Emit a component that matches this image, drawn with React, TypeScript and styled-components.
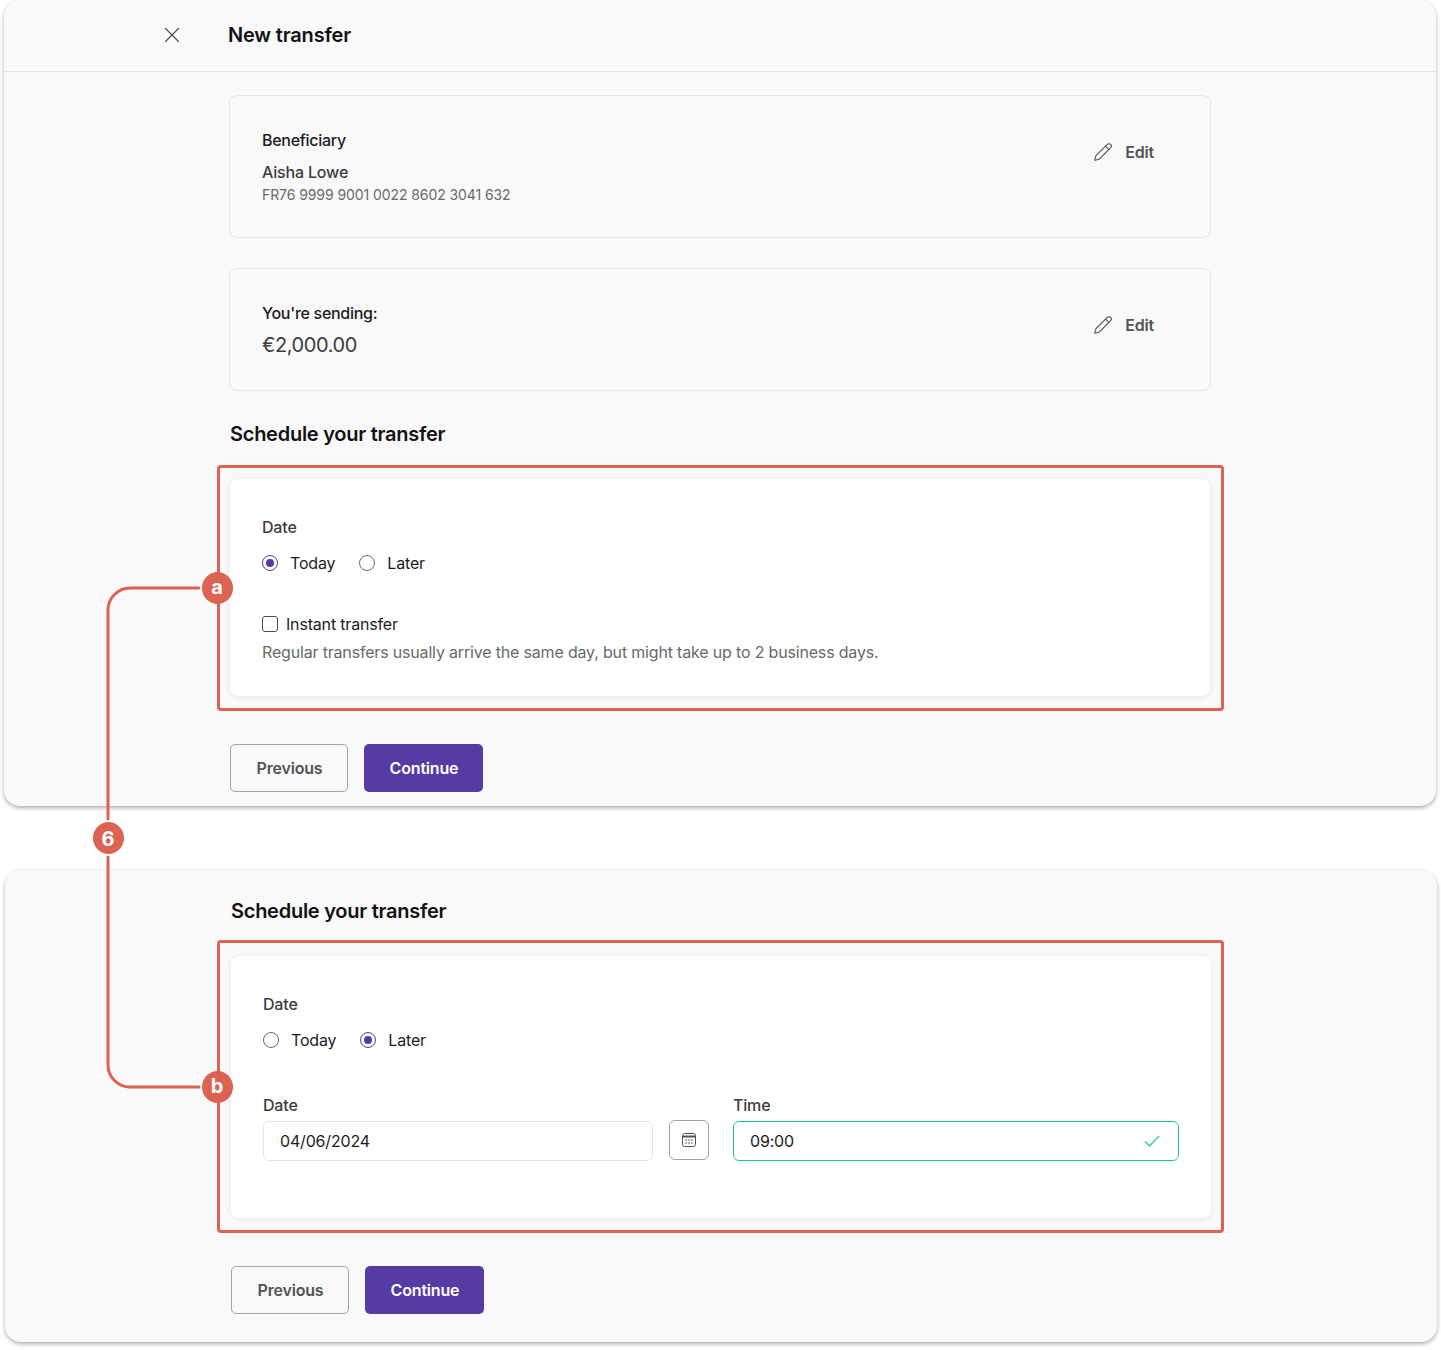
import React from "react";
import styled, { createGlobalStyle } from "styled-components";
import { Pencil, X } from "lucide-react";

const RED = "#dc6252";
const PURPLE = "#563ba5";

const GlobalStyle = createGlobalStyle`
  html, body {
    margin: 0;
    background: #fff;
  }
  body {
    font-family: Inter, "Liberation Sans", sans-serif;
    font-size: 16px;
    line-height: 24px;
    letter-spacing: -0.011em;
    color: #3d3d3f;
  }
  * {
    box-sizing: border-box;
  }
  input, button {
    letter-spacing: inherit;
  }
`;

const RadioOption = ({ label, checked }: { label: string; checked?: boolean }) => (
  <RadioLabel>
    <RadioDot $checked={checked} />
    {label}
  </RadioLabel>
);

const DateRadios = ({ later }: { later?: boolean }) => (
  <>
    <FieldLabel>Date</FieldLabel>
    <RadioRow>
      <RadioOption label="Today" checked={!later} />
      <RadioOption label="Later" checked={later} />
    </RadioRow>
  </>
);

const EditButton = () => (
  <EditAction>
    <Pencil size={20} strokeWidth={1.25} />
    <span>Edit</span>
  </EditAction>
);

const Actions = () => (
  <ButtonRow>
    <SecondaryButton>Previous</SecondaryButton>
    <PrimaryButton>Continue</PrimaryButton>
  </ButtonRow>
);

const App = () => {
  return (
    <Page>
      <GlobalStyle />
      <Panel $left={4}>
        <Header>
          <CloseSlot>
            <X size={26} strokeWidth={1.05} />
          </CloseSlot>
          <Title>New transfer</Title>
        </Header>
        <Content $bottom={14}>
          <SummaryCard>
            <div>
              <CardTitle>Beneficiary</CardTitle>
              <Name>Aisha Lowe</Name>
              <Iban>FR76 9999 9001 0022 8602 3041 632</Iban>
            </div>
            <EditButton />
          </SummaryCard>
          <SummaryCard $top={30}>
            <div>
              <CardTitle>You're sending:</CardTitle>
              <Amount>€2,000.00</Amount>
            </div>
            <EditButton />
          </SummaryCard>
          <Heading $top={31}>Schedule your transfer</Heading>
          <Highlight $top={33} $inset="-14px -14px -15px -13px">
            <FormCard $bottom={32}>
              <DateRadios />
              <CheckRow>
                <CheckBox />
                Instant transfer
              </CheckRow>
              <Help>Regular transfers usually arrive the same day, but might take up to 2 business days.</Help>
            </FormCard>
          </Highlight>
          <Actions />
        </Content>
      </Panel>

      <Panel $left={5} $top={64} $pad={29}>
        <Content $bottom={28}>
          <Heading>Schedule your transfer</Heading>
          <Highlight $top={33} $inset="-16px -13px -15px -14px">
            <FormCard $bottom={57}>
              <DateRadios later />
              <FieldGrid>
                <Field>
                  <FieldLabel>Date</FieldLabel>
                  <TextInput readOnly value="04/06/2024" />
                </Field>
                <CalendarButton>
                  <svg width="14" height="14" viewBox="0 0 14 14" fill="none" stroke="#555" strokeWidth="1">
                    <rect x="0.5" y="0.5" width="13" height="13" rx="2" />
                    <path d="M0.5 3.5h13" strokeWidth="2" />
                    <path d="M3.5 7h1.2M6.4 7h1.2M9.3 7h1.2M3.5 10h1.2M6.4 10h1.2M9.3 10h1.2" strokeWidth="1.3" />
                  </svg>
                </CalendarButton>
                <Field>
                  <FieldLabel>Time</FieldLabel>
                  <InputWrap>
                    <TextInput $valid readOnly value="09:00" />
                    <CheckMark width="16" height="12" viewBox="0 0 16 12" fill="none">
                      <path d="M1 6.5l4.5 4.5L15 1" stroke="#35d096" strokeWidth="1.4" />
                    </CheckMark>
                  </InputWrap>
                </Field>
              </FieldGrid>
            </FormCard>
          </Highlight>
          <Actions />
        </Content>
      </Panel>

      <Connector width="210" height="530" viewBox="0 0 210 530" fill="none">
        <path d="M199 8H130a22 22 0 0 0-22 22V239M108 277V485a22 22 0 0 0 22 22h69" stroke={RED} strokeWidth="3" strokeLinecap="round" />
      </Connector>
      <Badge $x={217} $y={588}>a</Badge>
      <Badge $x={108} $y={838} $digit>6</Badge>
      <Badge $x={217} $y={1087}>b</Badge>
    </Page>
  );
};

export default App;

const Page = styled.div`
  position: relative;
  width: 1441px;
  height: 1350px;
  overflow: hidden;
`;

const Panel = styled.section<{ $left: number; $top?: number; $pad?: number }>`
  width: 1432px;
  margin-left: ${(p) => p.$left}px;
  margin-top: ${(p) => p.$top ?? 0}px;
  padding-top: ${(p) => p.$pad ?? 0}px;
  background: #f9f9f9;
  border-radius: 16px;
  box-shadow: 0 2px 4px rgba(0, 0, 0, 0.32);
`;

const Header = styled.header`
  display: flex;
  align-items: center;
  height: 72px;
  padding-bottom: 1px;
  border-bottom: 1px solid #e4e4e4;
`;

const CloseSlot = styled.div`
  display: flex;
  justify-content: center;
  width: 224px;
  padding-left: 112px;
  color: #4c4c4e;
`;

const Title = styled.h1`
  margin: 0;
  font-size: 20px;
  line-height: 28px;
  font-weight: 600;
  color: #111113;
`;

const Content = styled.div<{ $bottom: number }>`
  width: 1207px;
  padding-left: 225px;
  padding-bottom: ${(p) => p.$bottom}px;
`;

const SummaryCard = styled.div<{ $top?: number }>`
  display: flex;
  justify-content: space-between;
  align-items: flex-start;
  margin-top: ${(p) => p.$top ?? 23}px;
  padding: 32px 56px 31px 32px;
  border: 1px solid #e4e4e4;
  border-radius: 8px;
`;

const CardTitle = styled.div`
  font-weight: 500;
  letter-spacing: -0.018em;
  color: #1c1c1e;
`;

const Name = styled.div`
  margin-top: 8px;
  font-weight: 500;
`;

const Iban = styled.div`
  font-size: 14px;
  line-height: 22px;
  letter-spacing: -0.006em;
  color: #69696b;
`;

const Amount = styled.div`
  margin-top: 6px;
  font-size: 20px;
  line-height: 28px;
  letter-spacing: -0.02em;
`;

const EditAction = styled.div`
  display: flex;
  align-items: center;
  gap: 12px;
  height: 48px;
  font-weight: 600;
  color: #525254;

  svg {
    stroke: #4c4c4e;
  }
`;

const Heading = styled.h2<{ $top?: number }>`
  margin: ${(p) => p.$top ?? 0}px 0 0 1px;
  font-size: 20px;
  line-height: 24px;
  font-weight: 600;
  letter-spacing: -0.013em;
  color: #111113;
`;

const Highlight = styled.div<{ $top: number; $inset: string }>`
  position: relative;
  margin: ${(p) => p.$top}px 1px 0;

  &::after {
    content: "";
    position: absolute;
    inset: ${(p) => p.$inset};
    border: 3px solid ${RED};
    border-radius: 4px;
    pointer-events: none;
  }
`;

const FormCard = styled.div<{ $bottom: number }>`
  padding: 36px 32px ${(p) => p.$bottom}px;
  background: #fff;
  border-radius: 8px;
  box-shadow: 0 1px 6px rgba(0, 0, 0, 0.08);
`;

const FieldLabel = styled.div`
  font-weight: 500;
  color: #3d3d3f;
`;

const RadioRow = styled.div`
  display: flex;
  gap: 24px;
  margin-top: 12px;
`;

const RadioLabel = styled.label`
  display: flex;
  align-items: center;
  gap: 12px;
  color: #1c1c1e;
`;

const RadioDot = styled.span<{ $checked?: boolean }>`
  display: flex;
  align-items: center;
  justify-content: center;
  width: 16px;
  height: 16px;
  border-radius: 50%;
  border: 1px solid ${(p) => (p.$checked ? PURPLE : "#69696b")};

  &::after {
    content: "";
    display: ${(p) => (p.$checked ? "block" : "none")};
    width: 8px;
    height: 8px;
    border-radius: 50%;
    background: ${PURPLE};
  }
`;

const CheckRow = styled.label`
  display: flex;
  align-items: center;
  gap: 8px;
  margin-top: 37px;
  color: #1c1c1e;
`;

const CheckBox = styled.span`
  width: 16px;
  height: 16px;
  border: 1px solid #4c4c4e;
  border-radius: 3px;
`;

const Help = styled.p`
  margin: 4px 0 0;
  color: #69696b;
`;

const FieldGrid = styled.div`
  display: grid;
  grid-template-columns: 390px 40px 446px;
  column-gap: 16px;
  margin-top: 41px;

  > :last-child {
    margin-left: 8px;
    width: 446px;
  }
`;

const Field = styled.div`
  display: flex;
  flex-direction: column;
  gap: 4px;
`;

const InputWrap = styled.div`
  position: relative;
`;

const TextInput = styled.input<{ $valid?: boolean }>`
  display: block;
  width: 100%;
  height: 40px;
  padding: 0 16px;
  font: inherit;
  color: #1c1c1e;
  background: #fff;
  outline: none;
  border: 1px solid ${(p) => (p.$valid ? "#1fc98b" : "#e4e4e4")};
  border-radius: 6px;
`;

const CheckMark = styled.svg`
  position: absolute;
  top: 14px;
  right: 19px;
`;

const CalendarButton = styled.div`
  display: flex;
  align-items: center;
  justify-content: center;
  align-self: end;
  width: 40px;
  height: 40px;
  margin-bottom: 1px;
  border: 1px solid #a3a3a3;
  border-radius: 6px;
  background: #fff;
`;

const ButtonRow = styled.div`
  display: flex;
  gap: 16px;
  margin: 48px 0 0 1px;
`;

const BaseButton = styled.button`
  height: 48px;
  padding: 0 0 0 1px;
  font: inherit;
  font-weight: 600;
  border-radius: 5px;
`;

const SecondaryButton = styled(BaseButton)`
  width: 118px;
  color: #525254;
  background: transparent;
  border: 1px solid #a3a3a3;
`;

const PrimaryButton = styled(BaseButton)`
  width: 119px;
  color: #fff;
  background: ${PURPLE};
  border: none;
`;

const Connector = styled.svg`
  position: absolute;
  left: 0;
  top: 580px;
`;

const Badge = styled.span<{ $x: number; $y: number; $digit?: boolean }>`
  position: absolute;
  left: ${(p) => p.$x - 15.5}px;
  top: ${(p) => p.$y - 16}px;
  display: flex;
  align-items: center;
  justify-content: center;
  width: 31px;
  height: 32px;
  padding-top: ${(p) => (p.$digit ? 2 : 0)}px;
  padding-bottom: ${(p) => (p.$digit ? 0 : 2)}px;
  border-radius: 50%;
  background: ${RED};
  color: #fff;
  font-size: 20px;
  line-height: 24px;
  font-weight: 700;
`;
